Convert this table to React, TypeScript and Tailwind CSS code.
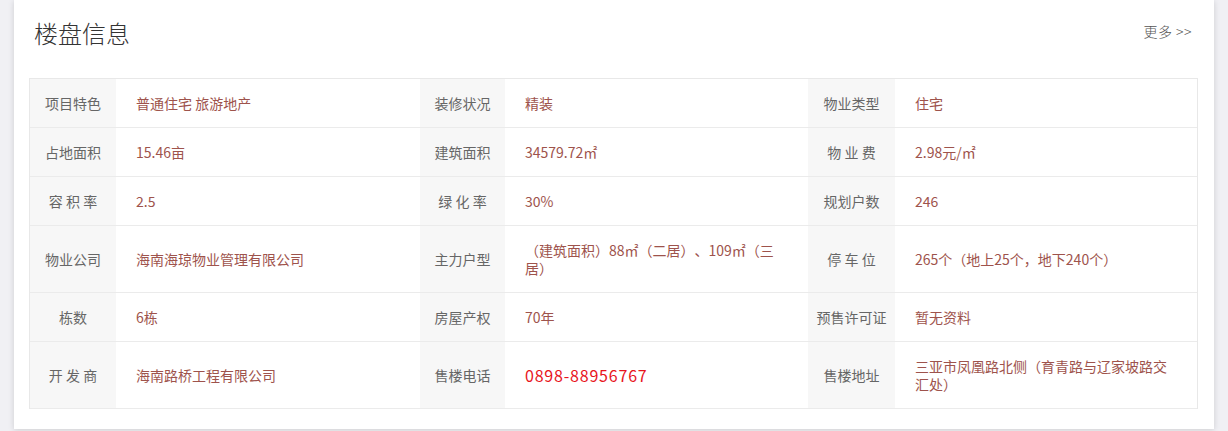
import React from "react";

type Cell = { label: string; value: string; phone?: boolean };

// 每行三组 label / value
const rows: Cell[][] = [
  [
    { label: "项目特色", value: "普通住宅 旅游地产" },
    { label: "装修状况", value: "精装" },
    { label: "物业类型", value: "住宅" },
  ],
  [
    { label: "占地面积", value: "15.46亩" },
    { label: "建筑面积", value: "34579.72㎡" },
    { label: "物 业 费", value: "2.98元/㎡" },
  ],
  [
    { label: "容 积 率", value: "2.5" },
    { label: "绿 化 率", value: "30%" },
    { label: "规划户数", value: "246" },
  ],
  [
    { label: "物业公司", value: "海南海琼物业管理有限公司" },
    { label: "主力户型", value: "（建筑面积）88㎡（二居）、109㎡（三居）" },
    { label: "停 车 位", value: "265个（地上25个，地下240个）" },
  ],
  [
    { label: "栋数", value: "6栋" },
    { label: "房屋产权", value: "70年" },
    { label: "预售许可证", value: "暂无资料" },
  ],
  [
    { label: "开 发 商", value: "海南路桥工程有限公司" },
    { label: "售楼电话", value: "0898-88956767", phone: true },
    { label: "售楼地址", value: "三亚市凤凰路北侧（育青路与辽家坡路交汇处）" },
  ],
];

export default function App() {
  return (
    <div
      className="w-[1228px] h-[431px] bg-[#f0f0f4] overflow-hidden [text-spacing-trim:space-all]"
      style={{ fontFamily: '"Noto Sans CJK SC", "Noto Sans", sans-serif' }}
    >
      <div className="ml-[14px] w-[1200px] h-[429px] bg-white shadow-[0_1px_6px_rgba(0,0,0,0.15)] pl-[15px] pr-[16px]">
        {/* 标题栏 */}
        <div className="h-[66px] flex items-center justify-between pl-[5px] pr-[6px]">
          <h2 className="text-[24px] text-[#333] font-light">楼盘信息</h2>
          <a className="text-[14px] text-[#555] mt-[-4px] tracking-[0.5px] font-light">更多 &gt;&gt;</a>
        </div>

        {/* 信息表 */}
        <div className="mt-[12px] border border-[#e8e8e8] border-b-0">
          {rows.map((row, i) => (
            <div
              key={i}
              className="grid grid-cols-[86px_304px_85px_303px_87px_302px] border-b border-[#ebebeb]"
            >
              {row.map((cell, j) => (
                <React.Fragment key={j}>
                  <div className="bg-[#f7f7f7] flex items-center justify-center text-[14px] leading-[18px] text-[#666] whitespace-pre">
                    {cell.label}
                  </div>
                  <div
                    className={`flex items-center py-[15px] pl-[20px] pr-[25px] ${
                      cell.phone
                        ? "text-[16px] leading-[18px] text-[#e8141c] tracking-[0.8px] pl-[19px]"
                        : "text-[14px] leading-[18px] text-[#9e534c]"
                    }`}
                  >
                    {cell.value}
                  </div>
                </React.Fragment>
              ))}
            </div>
          ))}
        </div>
      </div>
    </div>
  );
}
